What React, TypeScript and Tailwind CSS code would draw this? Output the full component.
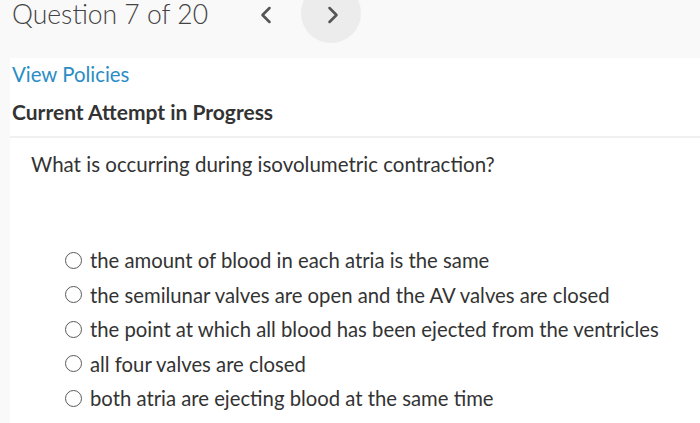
import { ChevronLeft, ChevronRight } from "lucide-react"

const options = [
  "the amount of blood in each atria is the same",
  "the semilunar valves are open and the AV valves are closed",
  "the point at which all blood has been ejected from the ventricles",
  "all four valves are closed",
  "both atria are ejecting blood at the same time",
]

export default function App() {
  return (
    <div className="w-[700px] h-[423px] overflow-hidden bg-[#f9f9f9] text-[#333] font-['Lato','Noto_Sans',sans-serif]">
      <div className="relative h-[58px]">
        <div className="pl-[12px] pt-[2px] text-[26.5px] font-light text-[#444] leading-[25px]">Question 7 of 20</div>
        <div className="absolute left-[252px] top-[1px] w-[28px] h-[28px] flex items-center justify-center text-[#555]">
          <ChevronLeft size={28} strokeWidth={2.2} />
        </div>
        <div className="absolute left-[301px] top-[-17px] w-[60px] h-[60px] rounded-full bg-[#ececec]" />
        <div className="absolute left-[319px] top-[1px] w-[28px] h-[28px] flex items-center justify-center text-[#555]">
          <ChevronRight size={28} strokeWidth={2.2} />
        </div>
      </div>
      <div className="ml-[10px] bg-white h-full">
        <div className="pl-[2px] pt-[5px] h-[78px]">
          <div className="text-[20.4px] leading-[22px] text-[#2a8dc5]">View Policies</div>
          <div className="mt-[16px] text-[21px] leading-[22px] font-bold text-[#333]">Current Attempt in Progress</div>
        </div>
        <div className="h-[2px] bg-[#f0f0f0]" />
        <div className="pl-[21px] pt-[14px] text-[20.5px] leading-[24px] text-[#333]">
          What is occurring during isovolumetric contraction?
        </div>
        <div className="pl-[55px] pt-[73px] flex flex-col gap-[12.5px]">
          {options.map((o) => (
            <div key={o} className="flex items-center h-[22px]">
              <span className="w-[17px] h-[17px] rounded-full border-[1.5px] border-[#5a5a5a] mr-[8px]" />
              <span className="text-[20.3px] leading-[22px] text-[#333]">{o}</span>
            </div>
          ))}
        </div>
      </div>
    </div>
  )
}
